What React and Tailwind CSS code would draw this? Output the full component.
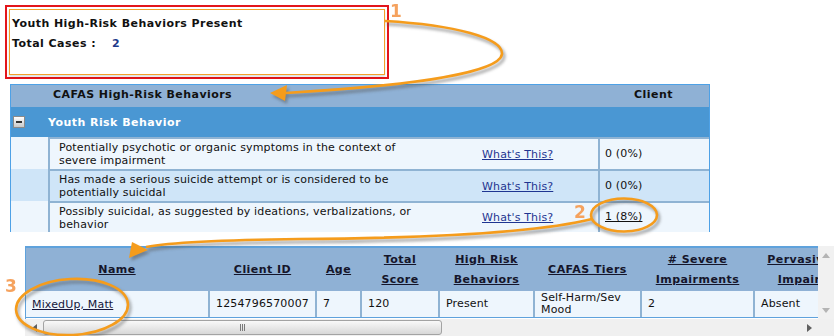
import React from "react";

const behaviors = [
  {
    text: "Potentially psychotic or organic symptoms in the context of severe impairment",
    value: "0 (0%)",
    bg: "bg-[#eef6fd]",
  },
  {
    text: "Has made a serious suicide attempt or is considered to be potentially suicidal",
    value: "0 (0%)",
    bg: "bg-[#cfe5f8]",
  },
  {
    text: "Possibly suicidal, as suggested by ideations, verbalizations, or behavior",
    value: "1 (8%)",
    link: true,
    bg: "bg-[#eef6fd]",
    last: true,
  },
];

const columns = [
  { w: "w-[182px]", head: ["Name"], cell: "MixedUp, Matt", link: true, first: true },
  { w: "w-[107px]", head: ["Client ID"], cell: "1254796570007" },
  { w: "w-[45px]", head: ["Age"], cell: "7" },
  { w: "w-[78px]", head: ["Total", "Score"], cell: "120" },
  { w: "w-[95px]", head: ["High Risk", "Behaviors"], cell: "Present" },
  { w: "w-[107px]", head: ["CAFAS Tiers"], cell: "Self-Harm/Sev Mood" },
  { w: "w-[113px]", head: ["# Severe", "Impairments"], cell: "2" },
  { w: "w-[131px]", head: ["Pervasive Mood", "Impairments"], cell: "Absent" },
];

function Callouts() {
  return (
    <>
      <path d="M385 21 C455 25 503 38 502 54 C500 72 420 85 286 93" />
      <ellipse cx="624" cy="215" rx="33" ry="16.5" />
      <path d="M592 219 C540 232 440 238 300 239 C220 240 172 242 146 247" />
      <ellipse cx="72" cy="307" rx="56" ry="28" transform="rotate(-3 72 307)" />
    </>
  );
}

function Arrows({ fill }) {
  return (
    <g fill={fill} stroke="none">
      <polygon points="270,93 287,85 285,101" />
      <polygon points="129,258 132,242 148,250" />
    </g>
  );
}

export default function App() {
  return (
    <div className="relative w-[834px] h-[336px] overflow-hidden bg-white text-[#111] font-['DejaVu_Sans',Verdana,sans-serif]">
      {/* summary box */}
      <div className="pl-[5px] pt-[5px]">
        <div className="w-[384px] h-[74px] border-2 border-[#e3151b] p-[2px]">
          <div className="h-full border border-[#f3a02a] pl-[2px] pt-[7px] shadow-[0_2px_2px_rgba(0,0,0,0.12)]">
            <div className="text-[11px] leading-[14px] font-bold tracking-[0.45px]">Youth High-Risk Behaviors Present</div>
            <div className="mt-[6px] text-[11px] leading-[14px] font-bold tracking-[0.45px]">
              Total Cases :<span className="ml-[16px] text-[#1d3a8a]">2</span>
            </div>
          </div>
        </div>
      </div>

      {/* CAFAS table */}
      <div className="ml-[10px] mt-[5px] w-[700px] border-t border-x border-[#4ea1e6] text-[11px] tracking-[0.15px]">
        <div className="flex h-[22px] pt-[3px] leading-[13px] bg-[#8fb1d5] font-bold tracking-[0.45px]">
          <div className="w-[37px]" />
          <div className="w-[550px] pl-[5px]">CAFAS High-Risk Behaviors</div>
          <div className="w-[111px] text-center">Client</div>
        </div>
        <div className="flex items-center h-[30px] bg-[#4a97d3]">
          <div className="ml-[2px] w-[12px] h-[12px] border border-[#8a8a8a] bg-gradient-to-b from-white to-[#c9c9c9] flex items-center justify-center">
            <div className="w-[6px] h-[2px] bg-[#333]" />
          </div>
          <div className="ml-[23px] text-white font-bold tracking-[0.45px] leading-[13px]">Youth Risk Behavior</div>
        </div>
        {behaviors.map((b) => (
          <div key={b.text} className={`flex ${b.last ? "h-[31px]" : "h-[32px]"} ${b.bg}`}>
            <div className="w-[37px]" />
            <div className="w-[550px] flex items-center border-t-2 border-l-2 border-[#8fb3d3] leading-[13px]">
              <div className="w-[377px] pl-[9px]">{b.text}</div>
              <a className="ml-[55px] text-[#1f3591] underline">What's This?</a>
            </div>
            <div className="w-[111px] flex items-center pl-[5px] border-t-2 border-l-2 border-[#8fb3d3]">
              {b.link ? <a className="underline text-[#111]">{b.value}</a> : b.value}
            </div>
          </div>
        ))}
      </div>

      {/* clients grid */}
      <div className="ml-[25px] mt-[14px] w-[809px] flex flex-col text-[11px] tracking-[0.15px]">
        <div className="flex h-[73px]">
          <div className="w-[793px] overflow-hidden border-t-2 border-l border-[#5fa2dc]">
            <div className="flex w-max h-[43px] bg-[#8fb1d5]">
              {columns.map((c) => (
                <div
                  key={c.head.join()}
                  className={`${c.w} ${c.first ? "" : "pl-[2px]"} shrink-0 flex flex-col items-center justify-center text-center font-bold tracking-[0.45px] leading-[20px] text-[#15152a]`}
                >
                  {c.head.map((h) => (
                    <span key={h} className="underline whitespace-nowrap">{h}</span>
                  ))}
                </div>
              ))}
            </div>
            <div className="flex w-max h-[27px] bg-[#eef6fd] border-b border-[#5fa2dc]">
              {columns.map((c) => (
                <div
                  key={c.cell}
                  className={`${c.w} shrink-0 flex items-center pl-[6px] leading-[12px] ${c.first ? "" : "border-l-2 border-[#8fb3d3]"}`}
                >
                  {c.link ? <a className="underline text-[#16163a] leading-[13px]">{c.cell}</a> : <span className="pr-[4px]">{c.cell}</span>}
                </div>
              ))}
            </div>
          </div>
          {/* vertical scrollbar */}
          <div className="w-[16px] bg-[#f1f1f1] flex flex-col items-center justify-between pt-[7px] pb-[6px]">
            <svg width="8" height="5" viewBox="0 0 8 5"><polygon points="4,0 8,5 0,5" fill="#b4b4b4" /></svg>
            <svg width="8" height="5" viewBox="0 0 8 5"><polygon points="0,0 8,0 4,5" fill="#b4b4b4" /></svg>
          </div>
        </div>
        {/* horizontal scrollbar */}
        <div className="flex h-[17px] bg-[#f0f0f0]">
          <div className="w-[18px] flex items-center justify-center">
            <svg width="5" height="8" viewBox="0 0 5 8"><polygon points="5,0 5,8 0,4" fill="#606060" /></svg>
          </div>
          <div className="w-[399px] my-[1px] rounded-[3px] border border-[#a3a3a3] bg-gradient-to-b from-[#f9f9f9] to-[#d8d8d8] flex items-center justify-center gap-[1px]">
            <div className="w-[1px] h-[7px] bg-[#7a7a7a]" />
            <div className="w-[1px] h-[7px] bg-[#7a7a7a]" />
            <div className="w-[1px] h-[7px] bg-[#7a7a7a]" />
          </div>
          <div className="flex-1" />
          <div className="w-[18px] flex items-center justify-center">
            <svg width="5" height="8" viewBox="0 0 5 8"><polygon points="0,0 5,4 0,8" fill="#606060" /></svg>
          </div>
          <div className="w-[16px]" />
        </div>
      </div>

      {/* annotations */}
      <svg className="absolute inset-0 pointer-events-none" width="834" height="336" viewBox="0 0 834 336">
        <defs>
          <filter id="blur" x="-20%" y="-20%" width="140%" height="160%">
            <feGaussianBlur stdDeviation="1.6" />
          </filter>
        </defs>
        <g transform="translate(2 3)" filter="url(#blur)" opacity="0.5">
          <g fill="none" stroke="#555" strokeWidth="3">
            <Callouts />
          </g>
          <Arrows fill="#555" />
        </g>
        <g fill="none" stroke="#f59c1c" strokeWidth="2.6">
          <Callouts />
        </g>
        <Arrows fill="#f59c1c" />
      </svg>
      <span className="absolute left-[390px] top-[3px] text-[17px] leading-[17px] font-bold text-[#f5a25e]">1</span>
      <span className="absolute left-[574px] top-[204px] text-[17px] leading-[17px] font-bold text-[#f5a25e]">2</span>
      <span className="absolute left-[5px] top-[278px] text-[17px] leading-[17px] font-bold text-[#f5a25e]">3</span>
    </div>
  );
}
